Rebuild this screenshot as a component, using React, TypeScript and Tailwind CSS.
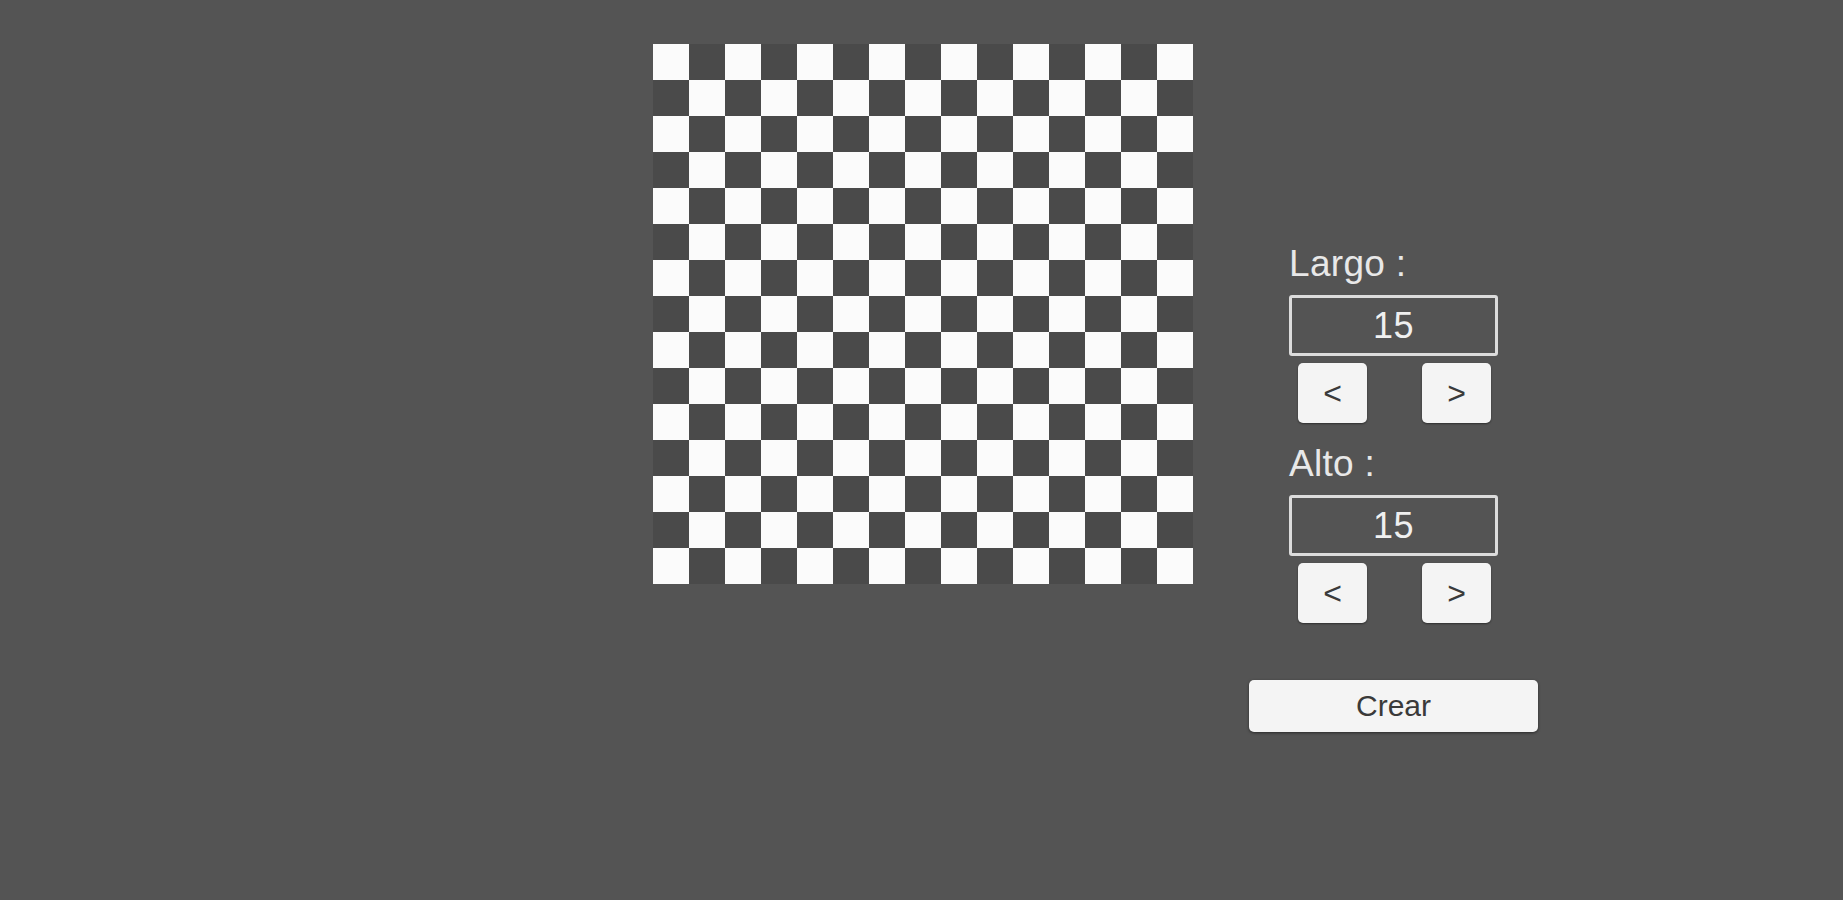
const SIZE = 15;

const Board = () => {
  const cells = [];
  for (let r = 0; r < SIZE; r++) {
    for (let c = 0; c < SIZE; c++) {
      cells.push(
        <div
          key={`${r}-${c}`}
          className={(r + c) % 2 === 0 ? 'bg-[#fbfbfb]' : 'bg-[#4a4a4a]'}
        />
      );
    }
  }
  return (
    <div className="grid grid-cols-[repeat(15,36px)] grid-rows-[repeat(15,36px)] shrink-0">
      {cells}
    </div>
  );
};

const StepButton = ({ label }: { label: string }) => (
  <button className="w-[69px] h-[60px] rounded-[5px] bg-[#f4f4f4] text-[#3a3a3a] text-[32px] leading-none shadow-[0_1px_2px_rgba(0,0,0,0.45)] flex items-center justify-center">
    {label}
  </button>
);

const Field = ({ label, value, first }: { label: string; value: number; first?: boolean }) => (
  <div className={`w-[209px] flex flex-col ${first ? '' : 'mt-[21px]'}`}>
    <div className="h-[40px] leading-[40px] text-[37px] tracking-[0.3px] text-[#e8e8e8]">{label}</div>
    <div className="mt-[11px] h-[61px] border-[3px] border-[#dcdcdc] rounded-[3px] flex items-center justify-center text-[36px] tracking-[0.5px] text-[#f0f0f0]">
      {value}
    </div>
    <div className="mt-[7px] flex justify-between pl-[9px] pr-[7px]">
      <StepButton label="<" />
      <StepButton label=">" />
    </div>
  </div>
);

export default function App() {
  return (
    <div
      className="w-full min-h-[900px] bg-[#545454] flex items-start pl-[653px] pt-[44px]"
      style={{ fontFamily: '"Liberation Sans", Arial, sans-serif' }}
    >
      <Board />
      <div className="ml-[56px] mt-[200px] w-[289px] flex flex-col items-center">
        <Field label="Largo :" value={15} first />
        <Field label="Alto :" value={15} />
        <button className="mt-[57px] w-[289px] h-[52px] rounded-[5px] bg-[#f4f4f4] text-[#3a3a3a] text-[30px] leading-none shadow-[0_1px_3px_rgba(0,0,0,0.5)]">
          Crear
        </button>
      </div>
    </div>
  );
}
